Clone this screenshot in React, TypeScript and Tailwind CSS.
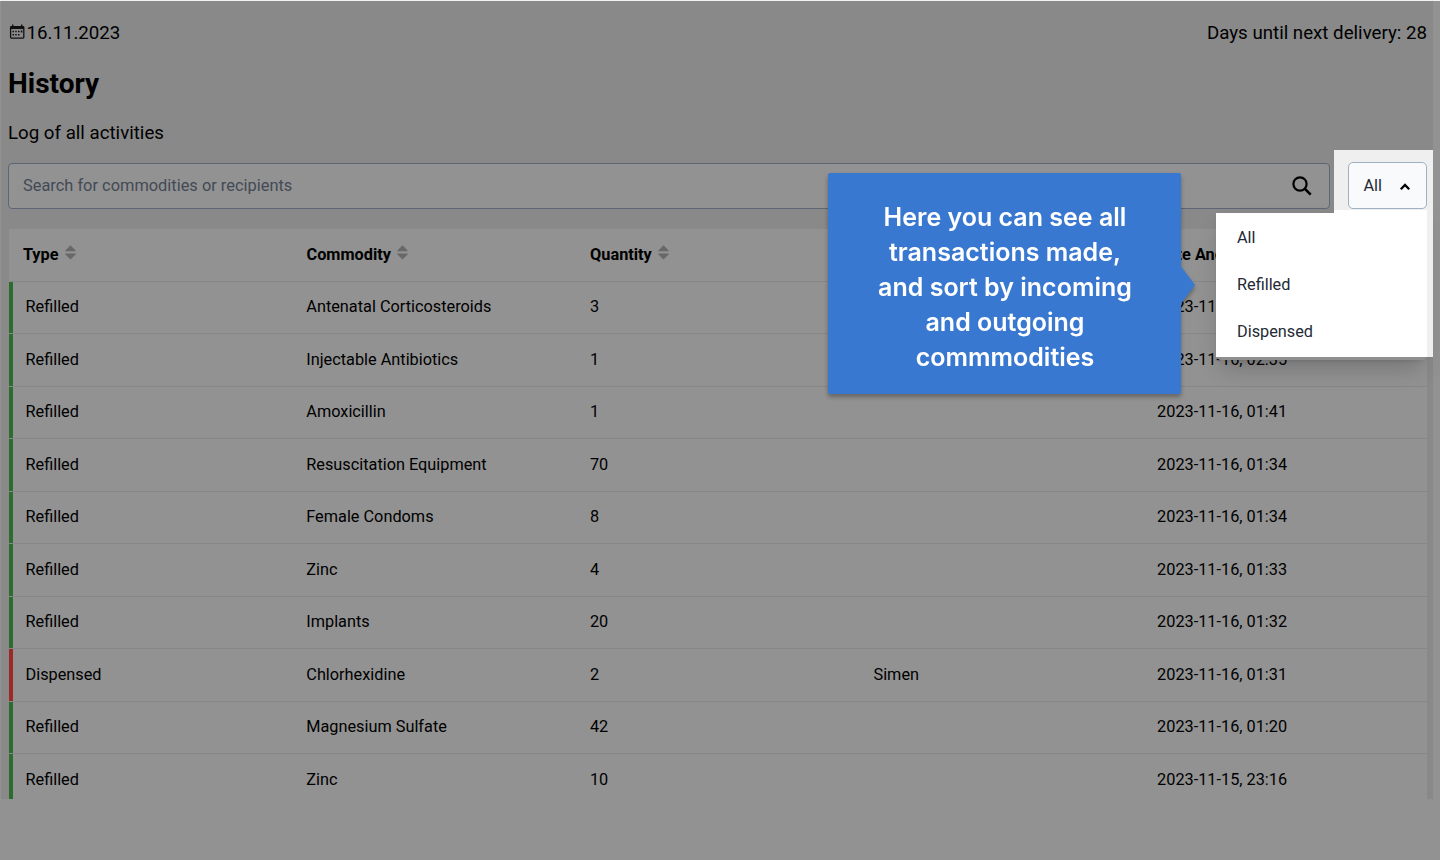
import React from "react";

type Entry = {
  type: "Refilled" | "Dispensed";
  commodity: string;
  quantity: number;
  recipient?: string;
  date: string;
};

const entries: Entry[] = [
  { type: "Refilled", commodity: "Antenatal Corticosteroids", quantity: 3, date: "2023-11-16, 02:36" },
  { type: "Refilled", commodity: "Injectable Antibiotics", quantity: 1, date: "2023-11-16, 02:35" },
  { type: "Refilled", commodity: "Amoxicillin", quantity: 1, date: "2023-11-16, 01:41" },
  { type: "Refilled", commodity: "Resuscitation Equipment", quantity: 70, date: "2023-11-16, 01:34" },
  { type: "Refilled", commodity: "Female Condoms", quantity: 8, date: "2023-11-16, 01:34" },
  { type: "Refilled", commodity: "Zinc", quantity: 4, date: "2023-11-16, 01:33" },
  { type: "Refilled", commodity: "Implants", quantity: 20, date: "2023-11-16, 01:32" },
  { type: "Dispensed", commodity: "Chlorhexidine", quantity: 2, recipient: "Simen", date: "2023-11-16, 01:31" },
  { type: "Refilled", commodity: "Magnesium Sulfate", quantity: 42, date: "2023-11-16, 01:20" },
  { type: "Refilled", commodity: "Zinc", quantity: 10, date: "2023-11-15, 23:16" },
];

function CalendarIcon() {
  return (
    <svg width="16" height="16" viewBox="0 0 16 16" fill="none" className="text-[#111]">
      <rect x="1.6" y="2.7" width="13.2" height="11.4" rx="0.8" stroke="currentColor" strokeWidth="1.3" />
      <path d="M1.4 3.9h13.6" stroke="currentColor" strokeWidth="2.2" />
      <path d="M3.7 .6v3M12.7 .6v3" stroke="currentColor" strokeWidth="1.4" />
      <path d="M6.2 6.7h1.5v1.5H6.2zM9 6.7h1.5v1.5H9zM11.8 6.5h1.6v1.9h-1.6zM3.5 6.7H5v1.5H3.5zM3.5 9.9H5v1.5H3.5zM6.2 9.9h1.5v1.5H6.2zM9 9.9h1.5v1.5H9z" fill="currentColor" />
    </svg>
  );
}

function SortIcon() {
  return (
    <svg width="11" height="15" viewBox="0 0 11 15" fill="#686868" className="-mt-[4px]">
      <path d="M5.5.2 10.6 5.4V6.2H.4V5.4z" />
      <path d="M.4 8.6h10.2v.9L5.5 14.6.4 9.5z" />
    </svg>
  );
}

function HeaderCell({ label }: { label: string }) {
  return (
    <div className="flex items-center gap-[6px] pl-[13.9px] font-bold">
      <span className="whitespace-nowrap">{label}</span>
      <SortIcon />
    </div>
  );
}

export default function App() {
  return (
    <div className="relative h-[860px] w-[1440px] overflow-hidden border-t border-[#f0f3f1] bg-[#929292] font-['Roboto',sans-serif] text-[16.3px] text-black">
      <main className="ml-px h-[798px] w-[1432px] overflow-hidden bg-[#898989] pl-[7px]">
        <div className="flex h-[63px] items-center justify-between pt-px pr-[6px] text-[18.7px]">
          <div className="flex items-center gap-[1.5px] pl-[1px]">
            <span className="-mt-[1px]"><CalendarIcon /></span>
            <span>16.11.2023</span>
          </div>
          <span>Days until next delivery: 28</span>
        </div>
        <h1 className="flex h-[40px] items-center text-[28px] font-bold">History</h1>
        <p className="flex h-[59px] items-center text-[18.7px]">Log of all activities</p>
        <div className="flex h-[46px] w-[1322px] items-center justify-between rounded-[4px] border border-[#5b6774] bg-[#929292] pr-[17px] pl-[14px]">
          <span className="text-[16.4px] text-[#434a55]">Search for commodities or recipients</span>
          <svg width="20" height="20" viewBox="0 0 20 20" fill="none" stroke="black" strokeWidth="2.2">
            <circle cx="8" cy="8" r="6.6" />
            <path d="M12.7 12.7 18.7 18.7" strokeWidth="2.6" />
          </svg>
        </div>

        <section className="mt-[20px] ml-px w-[1418px] bg-[#929292]">
          <div className="grid h-[51.6px] grid-cols-5">
            <HeaderCell label="Type" />
            <HeaderCell label="Commodity" />
            <HeaderCell label="Quantity" />
            <div />
            <HeaderCell label="Date And Time" />
          </div>
          {entries.map((entry, index) => (
            <div key={index} className="grid h-[52.5px] grid-cols-5 items-stretch border-t border-[#868788]">
              <div className={entry.type === "Refilled" ? "flex items-center border-l-[4px] border-[#2c6d2f] pl-[12.5px]" : "flex items-center border-l-[4px] border-[#9c2923] pl-[12.5px]"}>
                {entry.type}
              </div>
              <div className="flex items-center pl-[13.7px]">{entry.commodity}</div>
              <div className="flex items-center pl-[13.7px]">{entry.quantity}</div>
              <div className="flex items-center pl-[13.7px]">{entry.recipient}</div>
              <div className="flex items-center pl-[13.7px]">{entry.date}</div>
            </div>
          ))}
        </section>
      </main>

      <div className="absolute top-[212px] left-[1217px] h-[147px] w-[209px] rounded-[4px] bg-[#8f8f8f] shadow-[0_12px_22px_-4px_rgba(0,0,0,0.2),0_2px_5px_-2px_rgba(0,0,0,0.15)]" />
      <div className="absolute top-[149px] left-[1334px] h-[207px] w-[99px] bg-[#efefef] pt-[12px] pl-[14px]">
        <button className="flex h-[47px] w-[79px] items-center justify-between rounded-[5px] border border-[#a0b0c1] bg-[#f8fafc] pr-[15px] pl-[14.5px] text-[#232a35]">
          <span className="pt-[2px]">All</span>
          <svg width="12" height="12" viewBox="0 0 12 12" fill="none" stroke="black" strokeWidth="2.3">
            <path d="M1.8 9.2 6 5l4.2 4.2" />
          </svg>
        </button>
        <div className="-ml-[14px] mt-px h-[10px] w-[93px] bg-white" />
      </div>
      <ul className="absolute top-[212px] left-[1216px] flex h-[144px] w-[211px] flex-col bg-white pt-[2px] pl-[21px] text-[#232a35]">
        <li className="flex h-[46.7px] items-center">All</li>
        <li className="flex h-[46.7px] items-center">Refilled</li>
        <li className="flex h-[46.7px] items-center">Dispensed</li>
      </ul>

      <aside className="absolute top-[172px] left-[828px] drop-shadow-[0_3px_2px_rgba(0,0,0,0.3)]">
        <div className="flex h-[221px] w-[353px] items-center justify-center rounded-[2px] bg-[#3978d0] pt-[8px] pl-[1px] text-center font-['Inter',sans-serif] text-[25px] leading-[35px] font-semibold text-white">
          <p>
            Here you can see all<br />
            transactions made,<br />
            and sort by incoming<br />
            and outgoing<br />
            commmodities
          </p>
        </div>
        <svg width="15" height="40" viewBox="0 0 15 40" className="absolute top-[92px] left-[352px]" fill="#3978d0">
          <path d="M0 0 15 20 0 40z" />
        </svg>
      </aside>
    </div>
  );
}
